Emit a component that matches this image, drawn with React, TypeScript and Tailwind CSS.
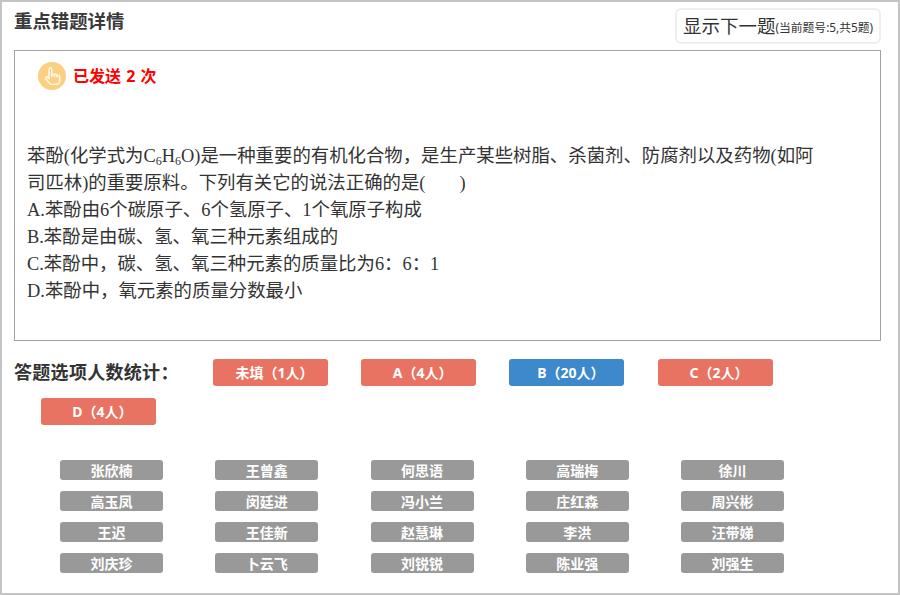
const sansFont = "font-['Noto_Sans','Noto_Sans_CJK_SC',sans-serif]";

const options = [
  { label: "未填（1人）", correct: false },
  { label: "A（4人）", correct: false },
  { label: "B（20人）", correct: true },
  { label: "C（2人）", correct: false },
  { label: "D（4人）", correct: false },
];

const students = [
  "张欣楠", "王曾鑫", "何思语", "高瑞梅", "徐川",
  "高玉凤", "闵廷进", "冯小兰", "庄红森", "周兴彬",
  "王迟", "王佳新", "赵慧琳", "李洪", "汪带娣",
  "刘庆珍", "卜云飞", "刘锐锐", "陈业强", "刘强生",
];

export default function App() {
  return (
    <div className={`h-[595px] w-[900px] overflow-hidden border-2 border-[#c4c4c4] bg-white ${sansFont}`}>
      {/* Header */}
      <div className="flex h-[48px] items-start justify-between pl-3 pr-[17px]">
        <h1 className="mt-[7px] text-[18.4px] leading-6 font-bold text-[#3a3a3a]">重点错题详情</h1>
        <button className="mt-[6px] flex h-[36px] w-[206px] items-center justify-center rounded-[6px] border-2 border-[#eeeeee] bg-white text-[#333]">
          <span className="text-[18.5px]">显示下一题</span>
          <span className="mt-[4px] text-[11.8px]">(当前题号:5,共5题)</span>
        </button>
      </div>

      {/* Question */}
      <div className="mr-[17px] ml-3 h-[291px] border border-[#a3a3a3] px-3 pt-[11px]">
        <div className="flex items-center gap-[7px] pl-[11px]">
          <div className="flex h-[28px] w-[28px] items-center justify-center rounded-full bg-[#fbd083]">
            <svg viewBox="0 0 24 24" className="h-[21px] w-[21px]" fill="none" stroke="#fff8e8" strokeWidth="1.7" strokeLinecap="round" strokeLinejoin="round">
              <path d="M8 14V3.7a1.6 1.6 0 0 1 3.2 0V12" />
              <path d="M11.2 10.5a1.5 1.5 0 0 1 3 0V12" />
              <path d="M14.2 11a1.5 1.5 0 0 1 3 0v1.2" />
              <path d="M17.2 12a1.5 1.5 0 0 1 3 0v4.5c0 2-1 3.5-2.5 4.5H10.5c-1.4-.6-2.4-1.6-3.3-3L4.2 14.6a1.5 1.5 0 0 1 2.4-1.7L8 14.5" />
            </svg>
          </div>
          <span className="text-[16px] font-bold [word-spacing:1px] text-[#ff0000]">已发送 2 次</span>
        </div>
        <div className="mt-[53px] w-[800px] font-['Liberation_Serif','Noto_Sans_CJK_SC',serif] text-[18.4px] leading-[27px] text-[#333]">
          <p>
            苯酚(化学式为C<sub className="text-[12px] leading-[0]">6</sub>H<sub className="text-[12px] leading-[0]">6</sub>O)是一种重要的有机化合物，是生产某些树脂、杀菌剂、防腐剂以及药物(如阿<br />司匹林)的重要原料。下列有关它的说法正确的是(<span className="inline-block w-[34px]" />)
          </p>
          <p>A.苯酚由6个碳原子、6个氢原子、1个氧原子构成</p>
          <p>B.苯酚是由碳、氢、氧三种元素组成的</p>
          <p>C.苯酚中，碳、氢、氧三种元素的质量比为6：6：1</p>
          <p>D.苯酚中，氧元素的质量分数最小</p>
        </div>
      </div>

      {/* Option stats */}
      <div className="mt-[18px] flex flex-wrap gap-y-3 pl-3">
        <div className="w-[172px] text-[18px] leading-[26px] font-bold tracking-[0.3px] whitespace-nowrap text-[#333]">答题选项人数统计：</div>
        {options.map((o) => (
          <div
            key={o.label}
            className={`mr-[6.2px] ml-[27px] flex h-[27px] w-[115px] items-center justify-center rounded-[3px] pl-[8px] text-[14px] font-bold text-white ${o.correct ? "bg-[#3e88cc]" : "bg-[#e87362]"}`}
          >
            {o.label}
          </div>
        ))}
      </div>

      {/* Students */}
      <div className="mt-[35px] ml-[58px] grid grid-cols-[repeat(5,103px)] gap-x-[52.25px] gap-y-[11px]">
        {students.map((name) => (
          <div
            key={name}
            className="flex h-[20px] items-center justify-center rounded-[3px] bg-[#999999] text-[14px] font-bold text-white"
          >
            {name}
          </div>
        ))}
      </div>
    </div>
  );
}
